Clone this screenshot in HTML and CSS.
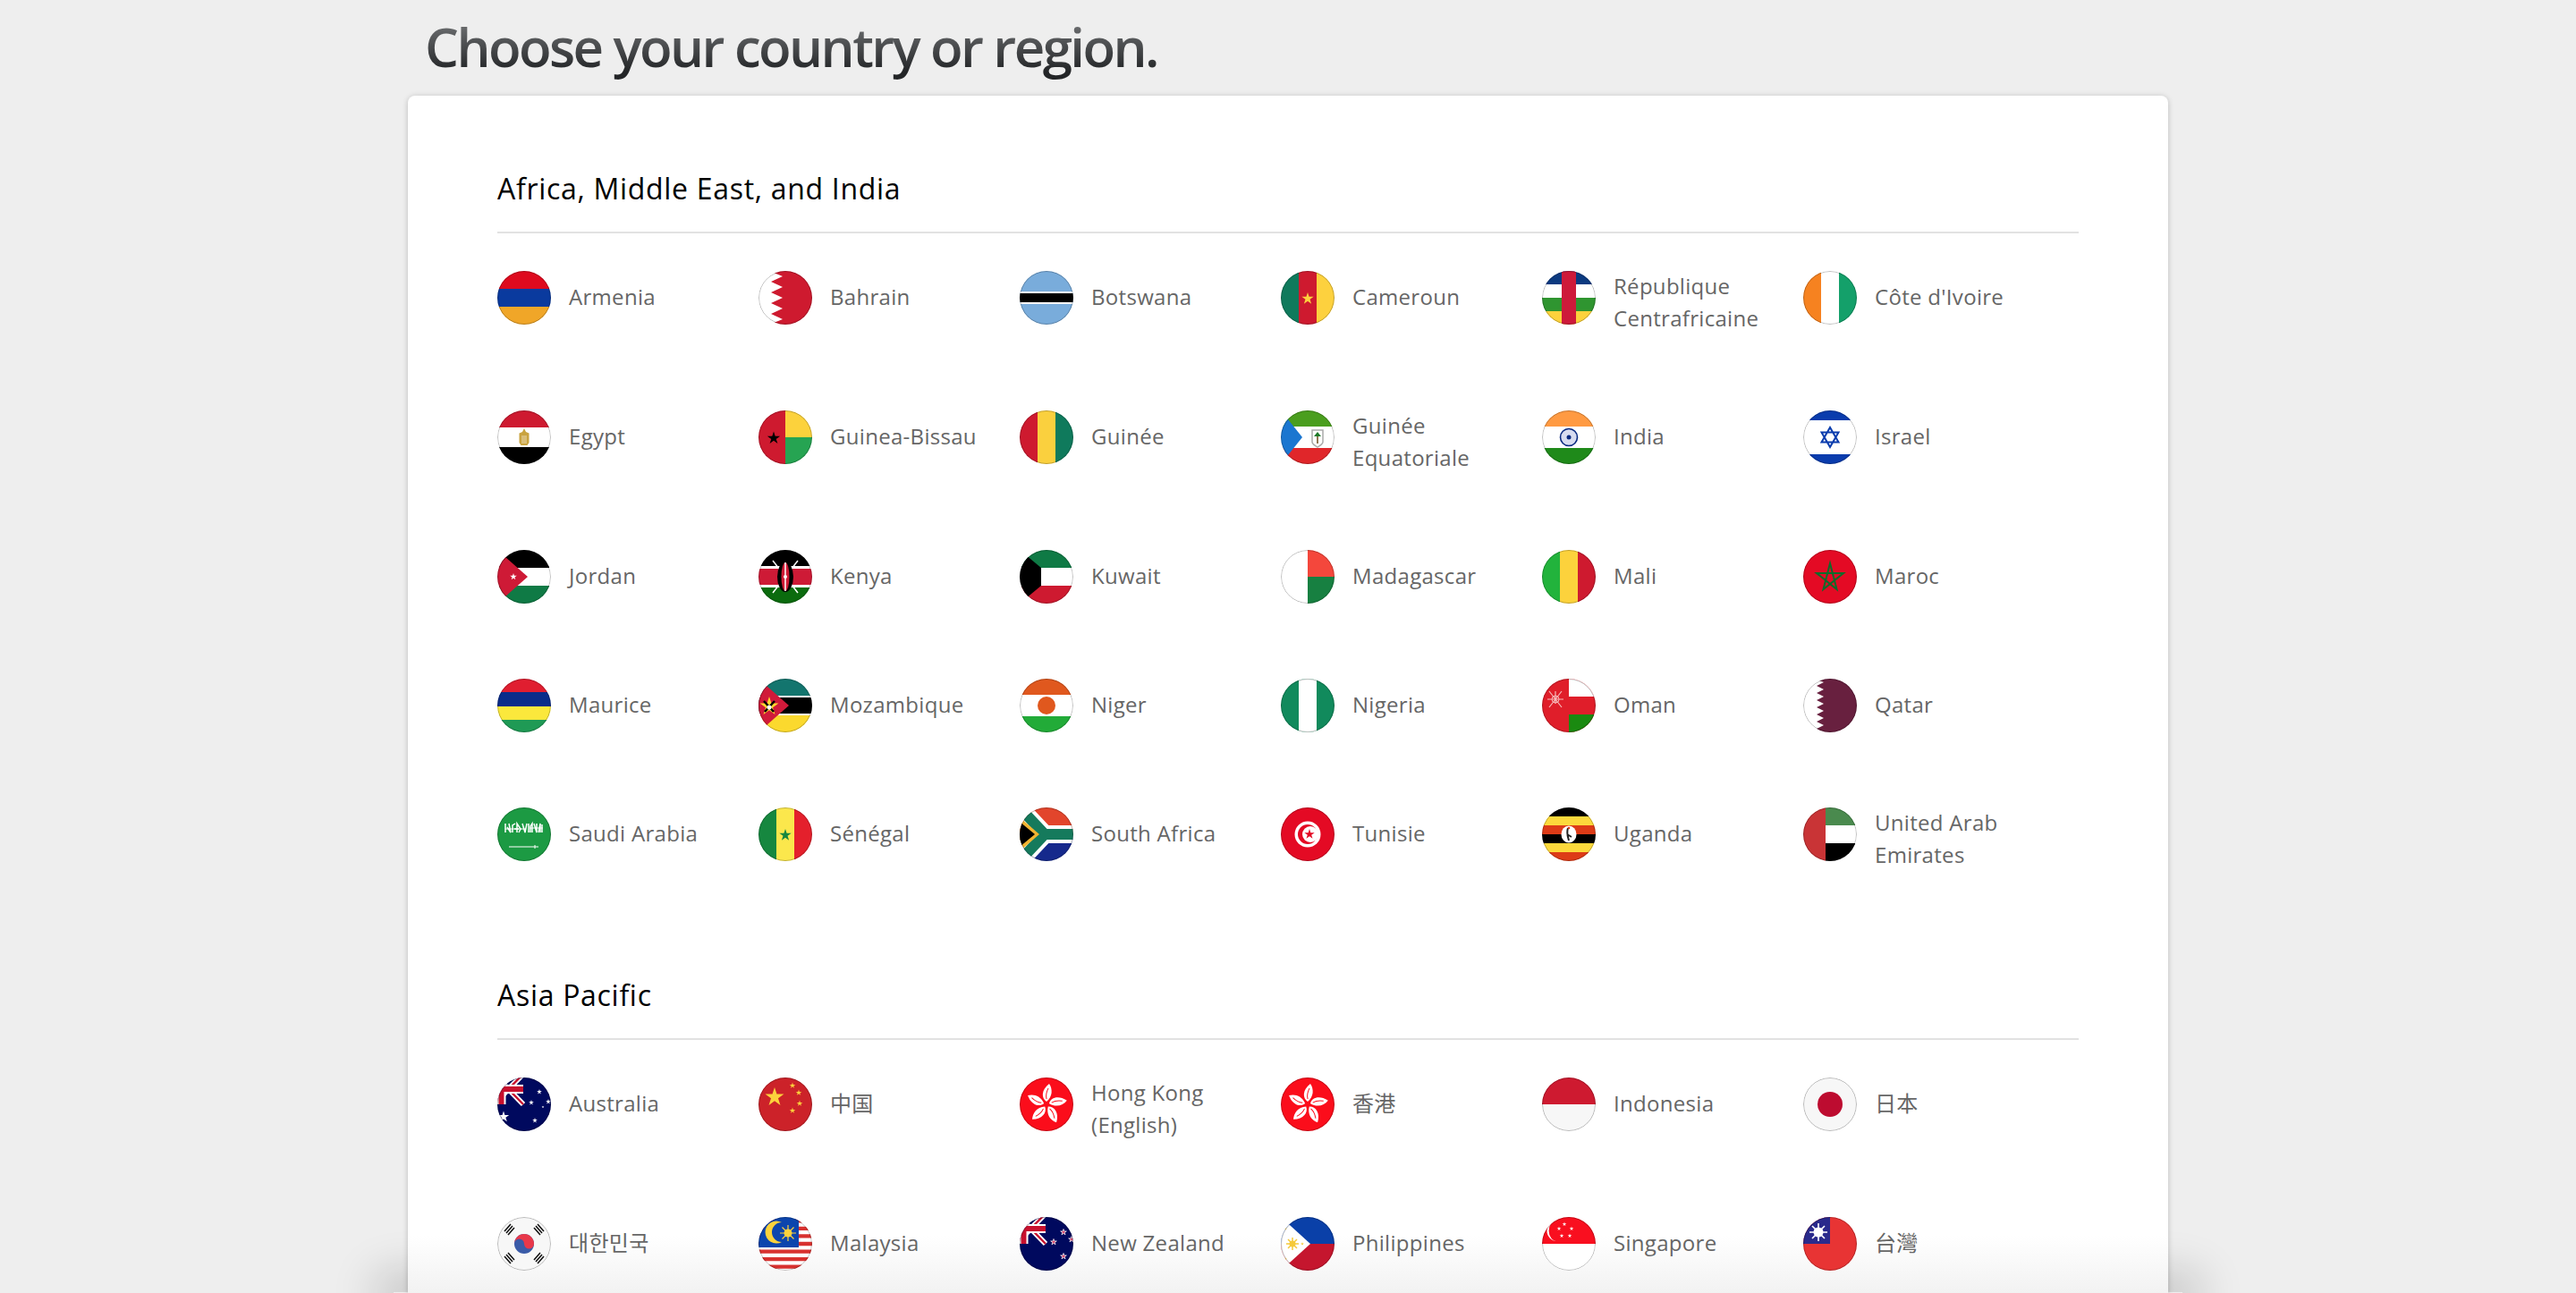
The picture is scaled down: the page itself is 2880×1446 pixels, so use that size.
FILE: index.html
```html
<!doctype html>
<html lang="en">
<head>
<meta charset="utf-8">
<title>Choose your country or region</title>
<link rel="stylesheet" href="styles.css">
</head>
<body>

<!-- shared flag parts -->
<svg class="defs" aria-hidden="true">
  <defs>
    <polygon id="star" points="0,-1 .224,-.309 .951,-.309 .363,.118 .588,.809 0,.382 -.588,.809 -.363,.118 -.951,-.309 -.224,-.309"/>
    <g id="jack">
      <rect width="29" height="30" fill="#00095e"/>
      <path d="M-6 -6 29 30M-6 32 29 -4" stroke="#fff" stroke-width="6"/>
      <path d="M-6 -6 29 30M-6 32 29 -4" stroke="#c8102e" stroke-width="2.4"/>
      <path d="M0 13H29M4.500 0V30" stroke="#fff" stroke-width="10"/>
      <path d="M0 13H29M4.500 0V30" stroke="#c8102e" stroke-width="6"/>
    </g>
    <g id="bauhinia">
      <g id="petal">
        <path d="M0 -3C-6 -7 -6 -16 3 -23C7 -17 7 -9 0 -3Z" fill="#fff"/>
        <path d="M0 -6C-1 -10 0 -14 2 -18" stroke="#fb0d1b" fill="none"/>
      </g>
      <use href="#petal" transform="rotate(72)"/>
      <use href="#petal" transform="rotate(144)"/>
      <use href="#petal" transform="rotate(216)"/>
      <use href="#petal" transform="rotate(288)"/>
    </g>
  </defs>
</svg>

<div class="shade"></div>

<main class="page">
  <h1 class="title">Choose your country or region.</h1>

  <div class="card">
    <div class="card-fade"></div>

    <section class="region">
      <h2 class="region-name">Africa, Middle East, and India</h2>
      <ul class="countries">

        <li><a class="country" href="#">
          <svg class="flag" viewBox="0 0 60 60"><rect width="60" height="20" fill="#de0a1e"/><rect y="20" width="60" height="20" fill="#0a3a9e"/><rect y="40" width="60" height="20" fill="#f0a628"/><circle class="ring" cx="30" cy="30" r="29.500"/></svg>
          <span class="name">Armenia</span></a></li>

        <li><a class="country" href="#">
          <svg class="flag" viewBox="0 0 60 60"><rect width="60" height="60" fill="#fff"/><path d="M60 0H12L27 6 14 12 27 18 14 24 27 30 14 36 27 42 14 48 27 54 12 60H60Z" fill="#ce1a2f"/><circle class="ring" cx="30" cy="30" r="29.500"/></svg>
          <span class="name">Bahrain</span></a></li>

        <li><a class="country" href="#">
          <svg class="flag" viewBox="0 0 60 60"><rect width="60" height="60" fill="#79acdb"/><rect y="23" width="60" height="14" fill="#fff"/><rect y="25" width="60" height="10" fill="#000"/><circle class="ring" cx="30" cy="30" r="29.500"/></svg>
          <span class="name">Botswana</span></a></li>

        <li><a class="country" href="#">
          <svg class="flag" viewBox="0 0 60 60"><rect width="20" height="60" fill="#0f7a5c"/><rect x="20" width="20" height="60" fill="#ce1a2f"/><rect x="40" width="20" height="60" fill="#fdd13e"/><use href="#star" transform="translate(30 31) scale(7)" fill="#fdd13e"/><circle class="ring" cx="30" cy="30" r="29.500"/></svg>
          <span class="name">Cameroun</span></a></li>

        <li><a class="country" href="#">
          <svg class="flag" viewBox="0 0 60 60"><rect width="60" height="15" fill="#0c3a80"/><rect y="15" width="60" height="15" fill="#fff"/><rect y="30" width="60" height="15" fill="#2f9530"/><rect y="45" width="60" height="15" fill="#fcd23c"/><rect x="22" width="16" height="60" fill="#ce1a3a"/><circle class="ring" cx="30" cy="30" r="29.500"/></svg>
          <span class="name">République Centrafricaine</span></a></li>

        <li><a class="country" href="#">
          <svg class="flag" viewBox="0 0 60 60"><rect width="20" height="60" fill="#f68220"/><rect x="20" width="20" height="60" fill="#fff"/><rect x="40" width="20" height="60" fill="#14a06a"/><circle class="ring" cx="30" cy="30" r="29.500"/></svg>
          <span class="name">Côte d'Ivoire</span></a></li>

        <li><a class="country" href="#">
          <svg class="flag" viewBox="0 0 60 60"><rect width="60" height="19" fill="#ce1a30"/><rect y="19" width="60" height="22" fill="#fff"/><rect y="41" width="60" height="19" fill="#000"/><path d="M30 20 32 24 35.500 25.500 35.500 36 33.500 39H26.500L24.500 36 24.500 25.500 28 24Z" fill="#c9a33f"/><path d="M28 28V37M30 28V37M32 28V37" stroke="#fff" stroke-width=".6"/><circle class="ring" cx="30" cy="30" r="29.500"/></svg>
          <span class="name">Egypt</span></a></li>

        <li><a class="country" href="#">
          <svg class="flag" viewBox="0 0 60 60"><rect width="30" height="60" fill="#ce1a2f"/><rect x="30" width="30" height="30" fill="#fcd23c"/><rect x="30" y="30" width="30" height="30" fill="#26a452"/><use href="#star" transform="translate(17 31) scale(7.500)" fill="#000"/><circle class="ring" cx="30" cy="30" r="29.500"/></svg>
          <span class="name">Guinea-Bissau</span></a></li>

        <li><a class="country" href="#">
          <svg class="flag" viewBox="0 0 60 60"><rect width="20" height="60" fill="#ce1a2f"/><rect x="20" width="20" height="60" fill="#fad03e"/><rect x="40" width="20" height="60" fill="#0f7a5c"/><circle class="ring" cx="30" cy="30" r="29.500"/></svg>
          <span class="name">Guinée</span></a></li>

        <li><a class="country" href="#">
          <svg class="flag" viewBox="0 0 60 60"><rect width="60" height="18" fill="#4a9e1e"/><rect y="18" width="60" height="24" fill="#fff"/><rect y="42" width="60" height="18" fill="#e0262a"/><path d="M0 0 24 30 0 60Z" fill="#1a76d0"/><path d="M35 22H47V35C47 38 44 39 41 41 38 39 35 38 35 35Z" fill="none" stroke="#aaa" stroke-width="1.500"/><path d="M41 27V37" stroke="#6b4a1a" stroke-width="1.500"/><path d="M37 29 41 24 45 29Z" fill="#1f7a2a"/><circle class="ring" cx="30" cy="30" r="29.500"/></svg>
          <span class="name">Guinée Equatoriale</span></a></li>

        <li><a class="country" href="#">
          <svg class="flag" viewBox="0 0 60 60"><rect width="60" height="18" fill="#ff9a42"/><rect y="18" width="60" height="24" fill="#fff"/><rect y="42" width="60" height="18" fill="#1f8a1a"/><circle cx="30" cy="30" r="9.500" fill="#d8dcf0" stroke="#0a2a80" stroke-width="1.600"/><circle cx="30" cy="30" r="2.500" fill="#0a2a80"/><circle class="ring" cx="30" cy="30" r="29.500"/></svg>
          <span class="name">India</span></a></li>

        <li><a class="country" href="#">
          <svg class="flag" viewBox="0 0 60 60"><rect width="60" height="60" fill="#fff"/><rect width="60" height="11" fill="#0a3cad"/><rect y="49" width="60" height="11" fill="#0a3cad"/><path d="M30 19 39.500 35.500H20.500ZM30 41 20.500 24.500H39.500Z" fill="none" stroke="#0a3cad" stroke-width="2"/><circle class="ring" cx="30" cy="30" r="29.500"/></svg>
          <span class="name">Israel</span></a></li>

        <li><a class="country" href="#">
          <svg class="flag" viewBox="0 0 60 60"><rect width="60" height="20" fill="#000"/><rect y="20" width="60" height="20" fill="#fff"/><rect y="40" width="60" height="20" fill="#0f7a45"/><path d="M0 0 34 30 0 60Z" fill="#ce1a36"/><use href="#star" transform="translate(18 30) scale(4)" fill="#fff"/><circle class="ring" cx="30" cy="30" r="29.500"/></svg>
          <span class="name">Jordan</span></a></li>

        <li><a class="country" href="#">
          <svg class="flag" viewBox="0 0 60 60"><rect width="60" height="18" fill="#000"/><rect y="18" width="60" height="24" fill="#fff"/><rect y="21" width="60" height="18" fill="#ce1a36"/><rect y="42" width="60" height="18" fill="#0b6b0e"/><path d="M16 12 44 48M44 12 16 48" stroke="#fff" stroke-width="1.500"/><ellipse cx="30" cy="30" rx="9" ry="17" fill="#000"/><ellipse cx="30" cy="30" rx="4.500" ry="16" fill="#ce1a36"/><path d="M30 14V46" stroke="#fff" stroke-width="1.500"/><circle cx="30" cy="30" r="2" fill="#fff"/><circle class="ring" cx="30" cy="30" r="29.500"/></svg>
          <span class="name">Kenya</span></a></li>

        <li><a class="country" href="#">
          <svg class="flag" viewBox="0 0 60 60"><rect width="60" height="20" fill="#0f7a45"/><rect y="20" width="60" height="20" fill="#fff"/><rect y="40" width="60" height="20" fill="#ce1a30"/><path d="M0 0 24 20V40L0 60Z" fill="#000"/><circle class="ring" cx="30" cy="30" r="29.500"/></svg>
          <span class="name">Kuwait</span></a></li>

        <li><a class="country" href="#">
          <svg class="flag" viewBox="0 0 60 60"><rect width="30" height="60" fill="#fff"/><rect x="30" width="30" height="30" fill="#f4473c"/><rect x="30" y="30" width="30" height="30" fill="#178041"/><circle class="ring" cx="30" cy="30" r="29.500"/></svg>
          <span class="name">Madagascar</span></a></li>

        <li><a class="country" href="#">
          <svg class="flag" viewBox="0 0 60 60"><rect width="20" height="60" fill="#22b33c"/><rect x="20" width="20" height="60" fill="#fcd23c"/><rect x="40" width="20" height="60" fill="#ce1a2f"/><circle class="ring" cx="30" cy="30" r="29.500"/></svg>
          <span class="name">Mali</span></a></li>

        <li><a class="country" href="#">
          <svg class="flag" viewBox="0 0 60 60"><rect width="60" height="60" fill="#e40a24"/><path d="M30 15 37.500 44 15 26H45L22.500 44Z" fill="none" stroke="#0e6b2a" stroke-width="2"/><circle class="ring" cx="30" cy="30" r="29.500"/></svg>
          <span class="name">Maroc</span></a></li>

        <li><a class="country" href="#">
          <svg class="flag" viewBox="0 0 60 60"><rect width="60" height="15" fill="#e01e30"/><rect y="15" width="60" height="16" fill="#0a2c8a"/><rect y="31" width="60" height="15" fill="#fbe83c"/><rect y="46" width="60" height="14" fill="#1f9a55"/><circle class="ring" cx="30" cy="30" r="29.500"/></svg>
          <span class="name">Maurice</span></a></li>

        <li><a class="country" href="#">
          <svg class="flag" viewBox="0 0 60 60"><rect width="60" height="19" fill="#13756e"/><rect y="19" width="60" height="22" fill="#fff"/><rect y="21" width="60" height="18" fill="#000"/><rect y="41" width="60" height="19" fill="#fbd92e"/><path d="M0 0 34 30 0 60Z" fill="#d01a3a"/><use href="#star" transform="translate(12 31) scale(11)" fill="#fbd92e"/><path d="M6 25 17 37M18 25 7 37" stroke="#000" stroke-width="2.500"/><circle cx="12" cy="32" r="2.500" fill="#fff"/><circle class="ring" cx="30" cy="30" r="29.500"/></svg>
          <span class="name">Mozambique</span></a></li>

        <li><a class="country" href="#">
          <svg class="flag" viewBox="0 0 60 60"><rect width="60" height="18" fill="#e0581e"/><rect y="18" width="60" height="24" fill="#fff"/><rect y="42" width="60" height="18" fill="#22ab38"/><circle cx="30" cy="30" r="10" fill="#e0581e"/><circle class="ring" cx="30" cy="30" r="29.500"/></svg>
          <span class="name">Niger</span></a></li>

        <li><a class="country" href="#">
          <svg class="flag" viewBox="0 0 60 60"><rect width="60" height="60" fill="#118a5c"/><rect x="20" width="20" height="60" fill="#fff"/><circle class="ring" cx="30" cy="30" r="29.500"/></svg>
          <span class="name">Nigeria</span></a></li>

        <li><a class="country" href="#">
          <svg class="flag" viewBox="0 0 60 60"><rect width="60" height="60" fill="#e01e2a"/><rect x="30" width="30" height="20" fill="#fff"/><rect x="30" y="40" width="30" height="20" fill="#1a8a10"/><path d="M8 14 22 32M22 14 8 32M15 14V28M6 23H24" stroke="#f6b9b9" stroke-width="1.200" fill="none"/><circle cx="15" cy="23" r="4" fill="none" stroke="#f6b9b9"/><circle class="ring" cx="30" cy="30" r="29.500"/></svg>
          <span class="name">Oman</span></a></li>

        <li><a class="country" href="#">
          <svg class="flag" viewBox="0 0 60 60"><rect width="60" height="60" fill="#fff"/><path d="M60 0H12L23 4 15 8 23 12 15 16 23 20 15 24 23 28 15 32 23 36 15 40 23 44 15 48 23 52 15 56 12 60H60Z" fill="#68203f"/><circle class="ring" cx="30" cy="30" r="29.500"/></svg>
          <span class="name">Qatar</span></a></li>

        <li><a class="country" href="#">
          <svg class="flag" viewBox="0 0 60 60"><rect width="60" height="60" fill="#1c9a43"/><path d="M9 18V28M11 22 15 28 13 18M17 28V20L20 18M19 24H24M22 28V18L26 24 24 28M28 18 31 28 33 18M35 28V18M37 28V21L39 18V28M41 18 44 28V18M46 28 48 18V28M50 28V19" fill="none" stroke="#fff" stroke-width="1.500"/><path d="M9 24H32M36 23H51" stroke="#fff" stroke-width="1"/><path d="M13 44H46" stroke="#fff" stroke-width="1.200"/><path d="M42 42V46" stroke="#fff"/><circle class="ring" cx="30" cy="30" r="29.500"/></svg>
          <span class="name">Saudi Arabia</span></a></li>

        <li><a class="country" href="#">
          <svg class="flag" viewBox="0 0 60 60"><rect width="20" height="60" fill="#16873f"/><rect x="20" width="20" height="60" fill="#fbe74c"/><rect x="40" width="20" height="60" fill="#e4202c"/><use href="#star" transform="translate(30 31) scale(7)" fill="#16873f"/><circle class="ring" cx="30" cy="30" r="29.500"/></svg>
          <span class="name">Sénégal</span></a></li>

        <li><a class="country" href="#">
          <svg class="flag" viewBox="0 0 60 60"><rect width="60" height="30" fill="#e2452c"/><rect y="30" width="60" height="30" fill="#15298c"/><path d="M-4 -4 28 30-4 64M28 30H64" fill="none" stroke="#fff" stroke-width="20"/><path d="M-4 -4 28 30-4 64M28 30H64" fill="none" stroke="#157a5c" stroke-width="12"/><path d="M0 11 22 30 0 49Z" fill="#f2b431"/><path d="M0 16 17 30 0 44Z" fill="#000"/><circle class="ring" cx="30" cy="30" r="29.500"/></svg>
          <span class="name">South Africa</span></a></li>

        <li><a class="country" href="#">
          <svg class="flag" viewBox="0 0 60 60"><rect width="60" height="60" fill="#e40a24"/><circle cx="30" cy="30" r="14.500" fill="#fff"/><circle cx="30" cy="30" r="11" fill="#e40a24"/><circle cx="33" cy="30" r="9" fill="#fff"/><use href="#star" transform="translate(32 30) scale(6)" fill="#e40a24"/><circle class="ring" cx="30" cy="30" r="29.500"/></svg>
          <span class="name">Tunisie</span></a></li>

        <li><a class="country" href="#">
          <svg class="flag" viewBox="0 0 60 60"><rect width="60" height="10" fill="#000"/><rect y="10" width="60" height="10" fill="#fcd93c"/><rect y="20" width="60" height="10" fill="#dd3b17"/><rect y="30" width="60" height="10" fill="#000"/><rect y="40" width="60" height="10" fill="#fcd93c"/><rect y="50" width="60" height="10" fill="#dd3b17"/><ellipse cx="30" cy="30" rx="8.500" ry="9.500" fill="#fff"/><path d="M29 23C27 28 29 33 30 37M28 30 33 33" stroke="#222" stroke-width="2" fill="none"/><circle cx="30" cy="23" r="1.300" fill="#dd3b17"/><circle class="ring" cx="30" cy="30" r="29.500"/></svg>
          <span class="name">Uganda</span></a></li>

        <li><a class="country" href="#">
          <svg class="flag" viewBox="0 0 60 60"><rect x="25" width="35" height="20" fill="#4a8a4e"/><rect x="25" y="20" width="35" height="20" fill="#fff"/><rect x="25" y="40" width="35" height="20" fill="#000"/><rect width="25" height="60" fill="#c93436"/><circle class="ring" cx="30" cy="30" r="29.500"/></svg>
          <span class="name">United Arab Emirates</span></a></li>

      </ul>
    </section>

    <section class="region">
      <h2 class="region-name">Asia Pacific</h2>
      <ul class="countries">

        <li><a class="country" href="#">
          <svg class="flag" viewBox="0 0 60 60"><rect width="60" height="60" fill="#00095e"/><use href="#jack"/><g fill="#fff"><use href="#star" transform="translate(47 16) scale(3)"/><use href="#star" transform="translate(38 28) scale(3)"/><use href="#star" transform="translate(51 33) scale(1.500)"/><use href="#star" transform="translate(57 27) scale(3)"/><use href="#star" transform="translate(42 48) scale(3)"/><use href="#star" transform="translate(7 44) scale(6.500)"/></g><circle class="ring" cx="30" cy="30" r="29.500"/></svg>
          <span class="name">Australia</span></a></li>

        <li><a class="country" href="#">
          <svg class="flag" viewBox="0 0 60 60"><rect width="60" height="60" fill="#cc2229"/><g fill="#fcd23c"><use href="#star" transform="translate(18 22) scale(11)"/><use href="#star" transform="translate(38 9) scale(3.500)"/><use href="#star" transform="translate(45 17) scale(3.500)"/><use href="#star" transform="translate(46 29) scale(3.500)"/><use href="#star" transform="translate(38 37) scale(3.500)"/></g><circle class="ring" cx="30" cy="30" r="29.500"/></svg>
          <span class="name">中国</span></a></li>

        <li><a class="country" href="#">
          <svg class="flag" viewBox="0 0 60 60"><rect width="60" height="60" fill="#fb0d1b"/><use href="#bauhinia" transform="translate(30 30)"/><circle class="ring" cx="30" cy="30" r="29.500"/></svg>
          <span class="name">Hong Kong (English)</span></a></li>

        <li><a class="country" href="#">
          <svg class="flag" viewBox="0 0 60 60"><rect width="60" height="60" fill="#fb0d1b"/><use href="#bauhinia" transform="translate(30 30)"/><circle class="ring" cx="30" cy="30" r="29.500"/></svg>
          <span class="name">香港</span></a></li>

        <li><a class="country" href="#">
          <svg class="flag" viewBox="0 0 60 60"><rect width="60" height="30" fill="#ce1a30"/><rect y="30" width="60" height="30" fill="#f7f7f7"/><circle class="ring" cx="30" cy="30" r="29.500"/></svg>
          <span class="name">Indonesia</span></a></li>

        <li><a class="country" href="#">
          <svg class="flag" viewBox="0 0 60 60"><rect width="60" height="60" fill="#f7f7f7"/><circle cx="30" cy="30" r="14" fill="#bd0c30"/><circle class="ring" cx="30" cy="30" r="29.500"/></svg>
          <span class="name">日本</span></a></li>

        <li><a class="country" href="#">
          <svg class="flag" viewBox="0 0 60 60"><rect width="60" height="60" fill="#f7f7f7"/><circle cx="30" cy="30" r="11" fill="#3a5ba8"/><path d="M19 30A11 11 0 0 1 41 30 5.500 5.500 0 0 1 30 30 5.500 5.500 0 0 0 19 30Z" fill="#e8384a"/><g stroke="#111" stroke-width="1.500"><path d="M8 16 15 8M10 18 17 10M12 20 19 12"/><path d="M41 12 48 20M43 10 50 18M45 8 52 16"/><path d="M8 44 15 52M10 42 17 50M12 40 19 48"/><path d="M41 48 48 40M43 50 50 42M45 52 52 44"/></g><circle class="ring" cx="30" cy="30" r="29.500"/></svg>
          <span class="name">대한민국</span></a></li>

        <li><a class="country" href="#">
          <svg class="flag" viewBox="0 0 60 60"><rect width="60" height="60" fill="#fff"/><path d="M0 4.300H60M0 12.900H60M0 21.400H60M0 30H60M0 38.600H60M0 47.100H60M0 55.700H60" stroke="#d8312f" stroke-width="4.300"/><rect width="45" height="34" fill="#0c45ad"/><path d="M26 6A12.500 12.500 0 1 0 26 28 10 10 0 1 1 26 6Z" fill="#fcd23c"/><circle cx="33" cy="18" r="4.500" fill="#fcd23c"/><path d="M33 9V27M24 18H42M26.500 11.500 39.500 24.500M39.500 11.500 26.500 24.500" stroke="#fcd23c" stroke-width="1.200"/><circle class="ring" cx="30" cy="30" r="29.500"/></svg>
          <span class="name">Malaysia</span></a></li>

        <li><a class="country" href="#">
          <svg class="flag" viewBox="0 0 60 60"><rect width="60" height="60" fill="#00095e"/><use href="#jack"/><g fill="#d8456a" stroke="#fff" stroke-width=".2"><use href="#star" transform="translate(49 17) scale(3.500)"/><use href="#star" transform="translate(38 28) scale(3.500)"/><use href="#star" transform="translate(58 25) scale(3.500)"/><use href="#star" transform="translate(49 44) scale(3.500)"/></g><circle class="ring" cx="30" cy="30" r="29.500"/></svg>
          <span class="name">New Zealand</span></a></li>

        <li><a class="country" href="#">
          <svg class="flag" viewBox="0 0 60 60"><rect width="60" height="30" fill="#0a40a8"/><rect y="30" width="60" height="30" fill="#c5162e"/><path d="M0 0 33 30 0 60Z" fill="#fff"/><circle cx="13" cy="30" r="3.500" fill="#f5c93a"/><path d="M13 23V37M6 30H20M8 25 18 35M18 25 8 35" stroke="#f5c93a" stroke-width="1.500"/><g fill="#f5c93a"><use href="#star" transform="translate(5 13) scale(2)"/><use href="#star" transform="translate(5 47) scale(2)"/><use href="#star" transform="translate(24 30) scale(2)"/></g><circle class="ring" cx="30" cy="30" r="29.500"/></svg>
          <span class="name">Philippines</span></a></li>

        <li><a class="country" href="#">
          <svg class="flag" viewBox="0 0 60 60"><rect width="60" height="30" fill="#f90f1f"/><rect y="30" width="60" height="30" fill="#fff"/><path d="M17 4A11 11 0 1 0 17 27 9 11 0 1 1 17 4Z" fill="#fff"/><g fill="#fff"><use href="#star" transform="translate(25 8) scale(2.500)"/><use href="#star" transform="translate(33 13) scale(2.500)"/><use href="#star" transform="translate(19 13) scale(2.500)"/><use href="#star" transform="translate(22 21) scale(2.500)"/><use href="#star" transform="translate(31 21) scale(2.500)"/></g><circle class="ring" cx="30" cy="30" r="29.500"/></svg>
          <span class="name">Singapore</span></a></li>

        <li><a class="country" href="#">
          <svg class="flag" viewBox="0 0 60 60"><rect width="60" height="60" fill="#e83434"/><rect width="30" height="30" fill="#2a2a8c"/><circle cx="17" cy="17" r="5.500" fill="#fff"/><path d="M17 7V27M7 17H27M10 10 24 24M24 10 10 24" stroke="#fff" stroke-width="1.600"/><circle class="ring" cx="30" cy="30" r="29.500"/></svg>
          <span class="name">台灣</span></a></li>

      </ul>
    </section>
  </div>
</main>

</body>
</html>
```

FILE: styles.css
```css
/* ---------- page ---------- */
html,body{height:100%}
body{
  margin:0;
  overflow:hidden;
  position:relative;
  background:#eee;
  font-family:"Open Sans","Noto Sans CJK SC","Noto Sans CJK KR",sans-serif;
}
.defs{display:none}

.page{
  position:relative;
  width:1968px;
  margin:0 auto;
}

/* ---------- title ---------- */
.title{
  margin:0;
  padding-left:19px;
  height:107px;
  font-size:60px;
  line-height:104px;
  font-weight:600;
  letter-spacing:-2.6px;
  background:linear-gradient(#6c6e70 25%,#232527 75%);
  -webkit-background-clip:text;
  background-clip:text;
  color:transparent;
}

/* ---------- card ---------- */
.card{
  position:relative;
  height:1339px;
  box-sizing:border-box;
  padding:80px 100px 0;
  background:#fff;
  border-radius:8px 8px 0 0;
  box-shadow:0 1px 6px rgba(0,0,0,.22);
  overflow:hidden;
}

.region{position:relative;z-index:1}
.region + .region{margin-top:114px}

.region-name{
  margin:0;
  padding-bottom:24px;
  border-bottom:2px solid #e2e2e2;
  color:#000;
  font-size:32px;
  line-height:48px;
  font-weight:400;
  letter-spacing:.7px;
}

/* ---------- country grid ---------- */
.countries{
  display:grid;
  grid-template-columns:repeat(6,292px);
  row-gap:84px;
  align-items:start;
  margin:42px 0 0;
  padding:0;
  list-style:none;
}

.country{
  display:flex;
  align-items:flex-start;
  gap:20px;
  color:#666;
  text-decoration:none;
}

.flag{
  flex:none;
  display:block;
  width:60px;
  height:60px;
  border-radius:50%;
}
.ring{fill:none;stroke:rgba(0,0,0,.25);stroke-width:1}

.name{
  display:flex;
  align-items:center;
  min-height:60px;
  max-width:190px;
  font-size:24px;
  line-height:36px;
  letter-spacing:.3px;
  position:relative;
  top:-1px;
}

/* ---------- bottom fade ---------- */
.shade{
  position:absolute;
  left:440px;
  right:440px;
  bottom:0;
  height:1px;
  box-shadow:0 0 50px 20px rgba(0,0,0,.2);
}
.card-fade{
  position:absolute;
  left:0;
  right:0;
  bottom:0;
  height:64px;
  background:linear-gradient(#fff,#f2f2f2);
}
```
